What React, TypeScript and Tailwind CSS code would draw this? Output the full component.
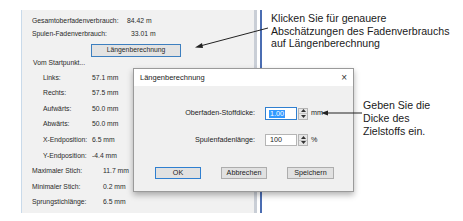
export default function App() {
  const indented = [
    ['Links:', '57.1 mm'],
    ['Rechts:', '57.5 mm'],
    ['Aufwärts:', '50.0 mm'],
    ['Abwärts:', '50.0 mm'],
    ['X-Endposition:', '6.5 mm'],
    ['Y-Endposition:', '-4.4 mm'],
  ];
  const stitches = [
    ['Maximaler Stich:', '11.7 mm'],
    ['Minimaler Stich:', '0.2 mm'],
    ['Sprungstichlänge:', '6.5 mm'],
  ];

  return (
    <div className="relative w-[463px] h-[221px] bg-white overflow-hidden font-['Liberation_Sans',Arial,sans-serif]">
      <div className="flex pl-[21px] pt-[10px]">
        {/* statistics panel */}
        <div className="w-[233px] h-[203px] bg-[#f1f1f1] border-l border-[#c9daea] text-[6.8px] text-[#2a2a2a] pt-[5px]">
          <div className="flex items-center h-[13px] pl-[10px]">
            <span className="w-[95px]">Gesamtoberfadenverbrauch:</span>
            <span>84.42 m</span>
          </div>
          <div className="flex items-center h-[13px] pl-[10px]">
            <span className="w-[99px]">Spulen-Fadenverbrauch:</span>
            <span>33.01 m</span>
          </div>
          <div className="pl-[69px] mt-[3px]">
            <button className="w-[90px] h-[13px] bg-[#e3e3e3] border border-[#3d7fbf] flex items-center justify-center leading-none">
              Längenberechnung
            </button>
          </div>
          <div className="flex items-center h-[13px] pl-[11px]">Vom Startpunkt...</div>
          {indented.map(([label, value]) => (
            <div key={label} className="flex items-center h-[15.6px] pl-[21px]">
              <span className="w-[49px]">{label}</span>
              <span>{value}</span>
            </div>
          ))}
          {stitches.map(([label, value]) => (
            <div key={label} className="flex items-center h-[15.6px] pl-[10px]">
              <span className="w-[71px]">{label}</span>
              <span>{value}</span>
            </div>
          ))}
        </div>
        <div className="w-[3px] h-[203px] bg-[#c9ced6]" />
        <div className="w-[3px]" />
        <div className="w-[2px] h-[203px] bg-[#4b6db2]" />
      </div>

      {/* dialog */}
      <div className="absolute left-[133px] top-[68px] w-[221px] h-[124px] bg-[#f0f0f0] border border-[#9a9a9a] shadow-[0_3px_6px_rgba(0,0,0,0.3)] flex flex-col">
        <div className="h-[17px] bg-white flex items-center justify-between pl-[6px] pr-[6px] text-[7.5px] text-[#1a1a1a]">
          <span>Längenberechnung</span>
          <span className="text-[10px] leading-none text-[#333]">×</span>
        </div>
        <div className="flex flex-col pt-[21px] text-[7.2px] text-[#222]">
          <div className="flex items-center h-[13px]">
            <span className="w-[121px] text-right">Oberfaden-Stoffdicke:</span>
            <div className="ml-[10px] w-[32px] h-[13px] bg-white border border-[#2f7fd0] flex items-center pl-[3px]">
              <span className="bg-[#3399ff] text-white leading-[8px] px-[1px]">1.00</span>
            </div>
            <Spin />
            <span className="ml-[3px]">mm</span>
          </div>
          <div className="flex items-center h-[12px] mt-[14px]">
            <span className="w-[121px] text-right">Spulenfadenlänge:</span>
            <div className="ml-[10px] w-[32px] h-[12px] bg-white border border-[#b5b5b5] flex items-center pl-[4px]">
              100
            </div>
            <Spin />
            <span className="ml-[3px]">%</span>
          </div>
          <div className="flex gap-[20px] pl-[21px] mt-[21px]">
            <button className="w-[46px] h-[12px] bg-[#e1e1e1] border border-[#2f7fd0] flex items-center justify-center leading-none">OK</button>
            <button className="w-[46px] h-[12px] bg-[#e1e1e1] border border-[#adadad] flex items-center justify-center leading-none">Abbrechen</button>
            <button className="w-[47px] h-[12px] bg-[#e1e1e1] border border-[#adadad] flex items-center justify-center leading-none">Speichern</button>
          </div>
        </div>
      </div>

      {/* callout texts */}
      <div className="absolute left-[271px] top-[12px] text-[10.6px] leading-[12.5px] text-[#1a1a1a]">
        <div>Klicken Sie für genauere</div>
        <div>Abschätzungen des Fadenverbrauchs</div>
        <div>auf Längenberechnung</div>
      </div>
      <div className="absolute left-[363px] top-[99px] text-[10.6px] leading-[13px] text-[#1a1a1a]">
        <div>Geben Sie die</div>
        <div>Dicke des</div>
        <div>Zielstoffs ein.</div>
      </div>

      <svg className="absolute inset-0 pointer-events-none" width="463" height="221" viewBox="0 0 463 221">
        <line x1="268" y1="28" x2="200" y2="46" stroke="#222" strokeWidth="1" />
        <polygon points="195,47.5 202,43 203,48" fill="#222" />
        <line x1="362" y1="113" x2="326" y2="113" stroke="#222" strokeWidth="1" />
        <polygon points="321,113 328,110.5 328,115.5" fill="#222" />
      </svg>
    </div>
  );
}

function Spin() {
  return (
    <div className="ml-[1px] w-[10px] h-[12px] bg-[#e6e6e6] border border-[#b5b5b5] flex flex-col">
      <div className="flex-1 flex items-center justify-center border-b border-[#c8c8c8]">
        <svg width="5" height="3" viewBox="0 0 5 3"><polygon points="0,3 5,3 2.5,0" fill="#333" /></svg>
      </div>
      <div className="flex-1 flex items-center justify-center">
        <svg width="5" height="3" viewBox="0 0 5 3"><polygon points="0,0 5,0 2.5,3" fill="#333" /></svg>
      </div>
    </div>
  );
}
